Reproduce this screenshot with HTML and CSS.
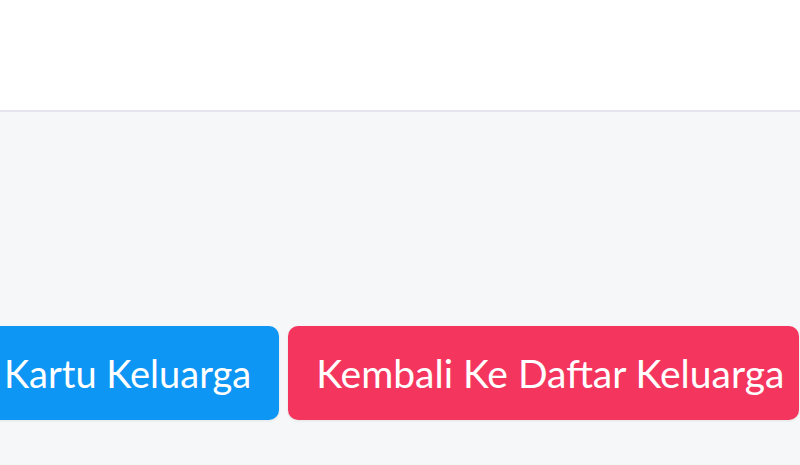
FILE: index.html
```html
<!DOCTYPE html>
<html lang="id">
<head>
    <meta charset="UTF-8">
    <meta name="viewport" content="width=device-width, initial-scale=1.0">
    <title>Detail Keluarga</title>
    <link rel="stylesheet" href="styles.css">
</head>
<body>
    <header class="topbar"></header>
    <main class="content">
        <div class="actions">
            <a class="btn btn-blue" href="#">Kartu Keluarga</a>
            <a class="btn btn-red" href="#">Kembali Ke Daftar Keluarga</a>
        </div>
    </main>
</body>
</html>
```

FILE: styles.css
```css
html, body {
    margin: 0;
    height: 100%;
}
body {
    font-family: "Lato", "Noto Sans", sans-serif;
    background-color: #f6f7f9;
    overflow: hidden;
}
.topbar {
    height: 110px;
    background-color: #fff;
    border-bottom: 2px solid #e5e6ed;
}
.content {
    padding-top: 214px;
}
.actions {
    display: flex;
    gap: 9px;
    margin-left: -24px;
}
.btn {
    display: block;
    height: 94px;
    line-height: 94px;
    padding: 0 28px;
    border-radius: 10px;
    color: #fff;
    font-size: 39px;
    text-decoration: none;
    white-space: nowrap;
    box-sizing: border-box;
    box-shadow: 0 1px 3px rgba(0,0,0,0.08);
}
.btn-blue {
    background-color: #0e96f4;
    font-size: 38px;
}
.btn-red {
    background-color: #f4365f;
    width: 511px;
}
```
